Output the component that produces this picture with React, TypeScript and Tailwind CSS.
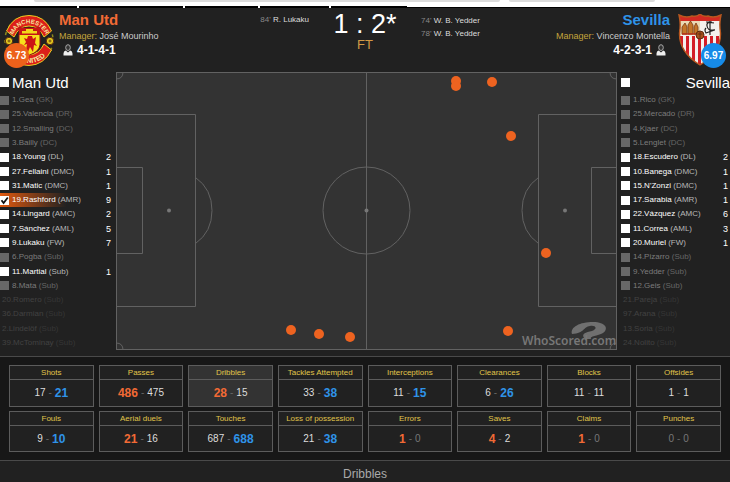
import React from "react";

type Player = { name: string; pos: string; n?: number; state: "on" | "dim" | "unused"; checked?: boolean };

const home: Player[] = [
  { name: "1.Gea", pos: "GK", state: "dim" },
  { name: "25.Valencia", pos: "DR", state: "dim" },
  { name: "12.Smalling", pos: "DC", state: "dim" },
  { name: "3.Bailly", pos: "DC", state: "dim" },
  { name: "18.Young", pos: "DL", n: 2, state: "on" },
  { name: "27.Fellaini", pos: "DMC", n: 1, state: "on" },
  { name: "31.Matic", pos: "DMC", n: 1, state: "on" },
  { name: "19.Rashford", pos: "AMR", n: 9, state: "on", checked: true },
  { name: "14.Lingard", pos: "AMC", n: 2, state: "on" },
  { name: "7.Sánchez", pos: "AML", n: 5, state: "on" },
  { name: "9.Lukaku", pos: "FW", n: 7, state: "on" },
  { name: "6.Pogba", pos: "Sub", state: "dim" },
  { name: "11.Martial", pos: "Sub", n: 1, state: "on" },
  { name: "8.Mata", pos: "Sub", state: "dim" },
  { name: "20.Romero", pos: "Sub", state: "unused" },
  { name: "36.Darmian", pos: "Sub", state: "unused" },
  { name: "2.Lindelöf", pos: "Sub", state: "unused" },
  { name: "39.McTominay", pos: "Sub", state: "unused" },
];

const away: Player[] = [
  { name: "1.Rico", pos: "GK", state: "dim" },
  { name: "25.Mercado", pos: "DR", state: "dim" },
  { name: "4.Kjaer", pos: "DC", state: "dim" },
  { name: "5.Lenglet", pos: "DC", state: "dim" },
  { name: "18.Escudero", pos: "DL", n: 2, state: "on" },
  { name: "10.Banega", pos: "DMC", n: 1, state: "on" },
  { name: "15.N'Zonzi", pos: "DMC", n: 1, state: "on" },
  { name: "17.Sarabia", pos: "AMR", n: 1, state: "on" },
  { name: "22.Vázquez", pos: "AMC", n: 6, state: "on" },
  { name: "11.Correa", pos: "AML", n: 3, state: "on" },
  { name: "20.Muriel", pos: "FW", n: 1, state: "on" },
  { name: "14.Pizarro", pos: "Sub", state: "dim" },
  { name: "9.Yedder", pos: "Sub", state: "dim" },
  { name: "12.Geis", pos: "Sub", state: "dim" },
  { name: "21.Pareja", pos: "Sub", state: "unused" },
  { name: "97.Arana", pos: "Sub", state: "unused" },
  { name: "13.Soria", pos: "Sub", state: "unused" },
  { name: "24.Nolito", pos: "Sub", state: "unused" },
];

const stats: [string, number, number][] = [
  ["Shots", 17, 21],
  ["Passes", 486, 475],
  ["Dribbles", 28, 15],
  ["Tackles Attempted", 33, 38],
  ["Interceptions", 11, 15],
  ["Clearances", 6, 26],
  ["Blocks", 11, 11],
  ["Offsides", 1, 1],
  ["Fouls", 9, 10],
  ["Aerial duels", 21, 16],
  ["Touches", 687, 688],
  ["Loss of possession", 21, 38],
  ["Errors", 1, 0],
  ["Saves", 4, 2],
  ["Claims", 1, 0],
  ["Punches", 0, 0],
];

const dots = [
  [340, 9], [340, 14], [376, 10], [395, 64], [430, 181],
  [392, 259], [175, 258], [203, 262], [234, 265],
];

function Tick({ id, dim, checked, label }: { id: string; dim?: boolean; checked?: boolean; label?: string }) {
  return (
    <input
      type="checkbox"
      id={id}
      aria-label={label}
      defaultChecked={checked}
      disabled={dim}
      className={"peer size-[9px] shrink-0 appearance-none " + (dim ? "bg-[#686868]" : "bg-white")}
    />
  );
}

function PlayerRow({ p, side }: { p: Player; side: string }) {
  const id = side + "-" + p.name;
  const tone = p.state === "on" ? "text-white" : p.state === "dim" ? "text-[#7c7c7c]" : "text-[#424242]";
  const posTone = p.state === "on" ? "text-[#b8b8b8]" : p.state === "dim" ? "text-[#666666]" : "text-[#363636]";
  return (
    <li
      className={
        "flex min-h-0 flex-1 items-center " +
        (p.checked ? "bg-linear-to-r from-[#e0590f] to-transparent to-60%" : "")
      }
    >
      {p.state !== "unused" && (
        <span className="relative mr-[3px] flex">
          <Tick id={id} dim={p.state === "dim"} checked={p.checked} />
          <svg viewBox="0 0 9 9" className="pointer-events-none absolute inset-0 hidden size-[9px] peer-checked:block">
            <path d="M1.5 4.2 3.6 7 7.8 1.5" fill="none" stroke="#111" strokeWidth="1.8" />
          </svg>
        </span>
      )}
      {p.state === "unused" ? (
        <span className={"pl-0.5 text-[8px] leading-3 whitespace-nowrap " + tone}>
          {p.name} <span className={posTone}>({p.pos})</span>
        </span>
      ) : (
        <label htmlFor={id} className={"text-[8px] leading-3 whitespace-nowrap " + tone}>
          {p.name} <span className={posTone}>({p.pos})</span>
        </label>
      )}
      {p.n !== undefined && <span className="ml-auto text-[9px] leading-3 text-white">{p.n}</span>}
    </li>
  );
}

function Person() {
  return (
    <svg viewBox="0 0 10 12" className="h-3 w-2.5" aria-hidden="true">
      <path d="M0.5 11.5V9.5Q0.5 7.2 2.8 6.6L5 8.4 7.2 6.6Q9.5 7.2 9.5 9.5V11.5Z" fill="#eee" />
      <ellipse cx="5" cy="3.6" rx="2.3" ry="2.9" fill="#333" stroke="#aaa" strokeWidth="1" />
    </svg>
  );
}

function UnitedCrest() {
  return (
    <svg viewBox="0 0 50 54" className="h-[54px] w-[50px]" aria-label="Man Utd crest">
      <circle cx="25" cy="26" r="24" fill="none" stroke="#8d8a1c" strokeWidth="1.5" strokeDasharray="3 5" />
      <path d="M2.500 17Q9 1.500 25 1.500T47.500 17L40 23Q35 12 25 12T10 23Z" fill="#dc1f1a" stroke="#e9cf20" />
      <path d="M4 37Q12 52 25 51.500Q40 51 47.500 36L40 30Q35 40.500 25 41T11 31Z" fill="#dc1f1a" stroke="#e9cf20" />
      <path d="M15 14H36V31Q35 38 25.500 41Q16 38 15 31Z" fill="#f6e11c" stroke="#8c1212" />
      <path d="M15 14H36V21H15Z" fill="#c51616" />
      <path d="M18 19.500V17H22V15H29V17H33V19.500Z" fill="#f3d719" />
      <path d="M20 24 23 25 24 22 28 22 29 25 32 23 31 29 33 32 30 31 29 38 26 33 24 38 22 36 23 30 20 31 22 28Z" fill="#cc1515" />
      <circle cx="5" cy="27" r="3.700" fill="#e3c91e" stroke="#5b2b10" />
      <circle cx="46" cy="27" r="3.700" fill="#e3c91e" stroke="#5b2b10" />
      <path d="M3.500 27H6.500M5 25.500V28.500M44.500 27H47.500M46 25.500V28.500" stroke="#6a4a12" />
      <path id="united-arc" d="M9 21Q14 9.500 25 9.500T42 21" fill="none" />
      <path id="united-base" d="M8 38Q14 49.500 25 49Q38 49 45 37" fill="none" />
      <text className="font-bold" fontSize="6" fill="#f6e8a0"><textPath href="#united-arc">MANCHESTER</textPath></text>
      <text className="font-bold" fontSize="7" fill="#f6e8a0"><textPath href="#united-base" startOffset="30%">UNITED</textPath></text>
    </svg>
  );
}

function SevillaCrest() {
  return (
    <svg viewBox="0 0 44 52" className="h-[52px] w-11" aria-label="Sevilla crest">
      <defs>
        <clipPath id="shield"><path d="M1 1Q8 4.500 14 2Q19 3 22 0Q25 3 30 2Q36 4.500 43 1Q41 9 42.500 19Q43 38 22 51Q1 38 1.500 19Q3 9 1 1Z" /></clipPath>
      </defs>
      <g clipPath="url(#shield)">
        <path d="M0 0H44V52H0Z" fill="#f4f1ee" />
        <path d="M0 0H44V7H0Z" fill="#d32a22" />
        <path d="M0 7H22V21H0Z" fill="#ead9b4" />
        <path d="M3.500 22V50M9.500 22V50M15.500 22V50M21.500 22V50M27.500 22V50M33.500 22V50M39.500 22V50" stroke="#d31e27" strokeWidth="3" />
        <path d="M4 20V13L7 9 9 13V20Z M10 20V11L12.500 7 15 11V20Z M16 20V13L18 9 20 13V20Z" fill="#c4762a" stroke="#7a3a14" strokeWidth="0.800" />
        <path d="M4 20H21" stroke="#b8301c" strokeWidth="1.500" />
        <path d="M32 7V21M36 9Q28 7 29 12T35 16T28 19Q26 16 28 14M28 8H34" fill="none" stroke="#222" strokeWidth="1.200" />
        <circle cx="22" cy="21" r="4" fill="#a7501d" stroke="#5d2a10" />
        <path d="M19.500 20H24.500M22 17.500V24.500" stroke="#5d2a10" strokeWidth="0.800" />
      </g>
      <path d="M1 1Q8 4.500 14 2Q19 3 22 0Q25 3 30 2Q36 4.500 43 1Q41 9 42.500 19Q43 38 22 51Q1 38 1.500 19Q3 9 1 1Z" fill="none" stroke="#b9571f" strokeWidth="1.400" />
    </svg>
  );
}

function Pitch() {
  return (
    <svg viewBox="0 0 501 278" className="block w-full" aria-label="Dribbles on the pitch">
      <rect x="0.5" y="0.5" width="500" height="277" fill="#333333" stroke="#626262" />
      <g fill="none" stroke="#626262">
        <path d="M250.500 0V278M0 42.500H79.500V234.500H0M0 95.500H26.500V181.500H0M501 42.500H422.500V234.500H501M501 95.500H475.500V181.500H501" />
        <circle cx="250.500" cy="138.500" r="43.500" />
        <path d="M79.500 105.500Q96 117 96 138.500T79.500 171.500M422.500 105.500Q406 117 406 138.500T422.500 171.500" />
        <path d="M0 7Q7 7 7 0M494 0Q494 7 501 7M0 271Q7 271 7 278M494 278Q494 271 501 271" />
      </g>
      <g fill="#777"><circle cx="250.500" cy="138.500" r="2" /><circle cx="53" cy="138.500" r="2" /><circle cx="449" cy="138.500" r="2" /></g>
      <path d="M456 262C454 255 464 250 477 250C490 250 493 257 487 261C482 264 473 264 475 267L469 267C464 262 470 260 476 259C482 257 480 253 474 254C467 255 469 261 456 262Z" fill="#707070" />
      <text x="406" y="273" fontSize="12" className="font-['Noto_Sans',sans-serif] font-semibold" fill="#777">WhoScored.com</text>
      {dots.map(([x, y]) => (
        <circle key={x + "-" + y} cx={x} cy={y} r="5" fill="#ee6320" />
      ))}
    </svg>
  );
}

function Stat({ label, a, b }: { label: string; a: number; b: number }) {
  const aTone = a > b ? "text-[12px] font-bold text-[#f26a35]" : a === 0 ? "text-[#777]" : "text-[#ddd]";
  const bTone = b > a ? "text-[12px] font-bold text-[#2f93e8]" : b === 0 ? "text-[#777]" : "text-[#ddd]";
  return (
    <button type="button" className={"flex min-w-0 flex-col border border-[#5c5c5c] " + (label === "Dribbles" ? "bg-[#333]" : "bg-[#212121]")}>
      <span className="h-[14px] w-full border-b border-[#5c5c5c] text-center text-[8px] leading-[13px] whitespace-nowrap text-[#e0c54a]">{label}</span>
      <span className="flex w-full flex-1 items-center justify-center gap-[3px] text-[10px] leading-4">
        <span className={aTone}>{a}</span>
        <span className="text-[#666]">-</span>
        <span className={bTone}>{b}</span>
      </span>
    </button>
  );
}

export default function App() {
  return (
    <div className="flex min-h-screen flex-col bg-[#212121] font-['Liberation_Sans',Arial,sans-serif] text-white">
      <div className="flex h-1.5 justify-between bg-white">
        <div className="ml-[34px] h-0.5 w-[466px] rounded-b-sm bg-[#dcdcdc]" />
        <div className="mr-[75px] h-0.5 w-[146px] rounded-b-sm bg-[#dcdcdc]" />
      </div>
      <div className="flex h-0.5 gap-0.5 bg-white">
        <div className="w-[77px] bg-black" />
        <div className="w-[104px] bg-black" />
        <div className="w-[73px] bg-black" />
        <div className="w-[69px] bg-black" />
        <div className="w-[76px] bg-black" />
        <div className="-ml-0.5 mt-px flex-1 bg-black" />
      </div>

      <header className="grid h-16 grid-cols-[1fr_112px_1fr]">
        <div className="flex min-w-0">
          <div className="relative shrink-0 pt-1.5 pl-1">
            <UnitedCrest />
            <span className="absolute top-[35px] left-1 flex size-[25px] items-center justify-center rounded-full bg-[#ed611b] text-[10px] font-bold">6.73</span>
          </div>
          <div className="pt-1 pl-[5px]">
            <h1 className="text-[15px] leading-4 font-bold text-[#f26a35]">Man Utd</h1>
            <p className="text-[9px] leading-4 whitespace-nowrap text-[#ccc]"><span className="text-[#c5a43c]">Manager:</span> José Mourinho</p>
            <p className="flex items-center gap-1 pl-1 text-[12px] leading-3 font-bold"><Person />4-1-4-1</p>
          </div>
          <p className="ml-auto pt-1.5 text-[8px] leading-3 whitespace-nowrap text-[#ddd]"><span className="text-[#888]">84'</span> R. Lukaku</p>
        </div>
        <div className="pt-px text-center">
          <p className="text-[27px] leading-[30px] text-white">1 : 2*</p>
          <p className="text-[13px] leading-3 text-[#d19a45]">FT</p>
        </div>
        <div className="flex min-w-0">
          <div className="pt-1.5 text-[8px] leading-[13px] whitespace-nowrap text-[#ddd]">
            <p><span className="text-[#888]">74'</span> W. B. Yedder</p>
            <p><span className="text-[#888]">78'</span> W. B. Yedder</p>
          </div>
          <div className="ml-auto pt-1 text-right">
            <h1 className="text-[15px] leading-4 font-bold text-[#2f93e8]">Sevilla</h1>
            <p className="text-[9px] leading-4 whitespace-nowrap text-[#ccc]"><span className="text-[#c5a43c]">Manager:</span> Vincenzo Montella</p>
            <p className="flex items-center justify-end gap-1 pr-1 text-[12px] leading-3 font-bold">4-2-3-1<Person /></p>
          </div>
          <div className="relative shrink-0 pt-1.5 pr-2 pl-2">
            <SevillaCrest />
            <span className="absolute top-[35px] right-1 flex size-[25px] items-center justify-center rounded-full bg-[#168be8] text-[10px] font-bold">6.97</span>
          </div>
        </div>
      </header>

      <main className="flex">
        <section className="flex w-[116px] shrink-0 flex-col pr-[5px]">
          <h2 className="flex h-[21px] items-center gap-[3px] text-[15px] leading-5"><Tick id="home-all" label="All Man Utd players" />Man Utd</h2>
          <ul className="flex flex-1 flex-col">{home.map((p) => <PlayerRow key={p.name} p={p} side="home" />)}</ul>
        </section>
        <div className="min-w-0 flex-1"><Pitch /></div>
        <section className="flex w-[113px] shrink-0 flex-col pr-0.5 pl-1">
          <h2 className="-mr-0.5 flex h-[21px] items-center justify-between text-[15px] leading-5"><Tick id="away-all" label="All Sevilla players" />Sevilla</h2>
          <ul className="flex flex-1 flex-col">{away.map((p) => <PlayerRow key={p.name} p={p} side="away" />)}</ul>
        </section>
      </main>

      <div className="mt-1.5 grid grid-cols-8 grid-rows-[42px_41px] gap-x-[5px] gap-y-1 border-y border-[#4a4a4a] bg-[#171717] px-[9px] py-2">
        {stats.map(([label, a, b]) => <Stat key={label} label={label} a={a} b={b} />)}
      </div>
      <h2 className="pt-1.5 text-center text-[12px] leading-[14px] text-[#aaa]">Dribbles</h2>
    </div>
  );
}
